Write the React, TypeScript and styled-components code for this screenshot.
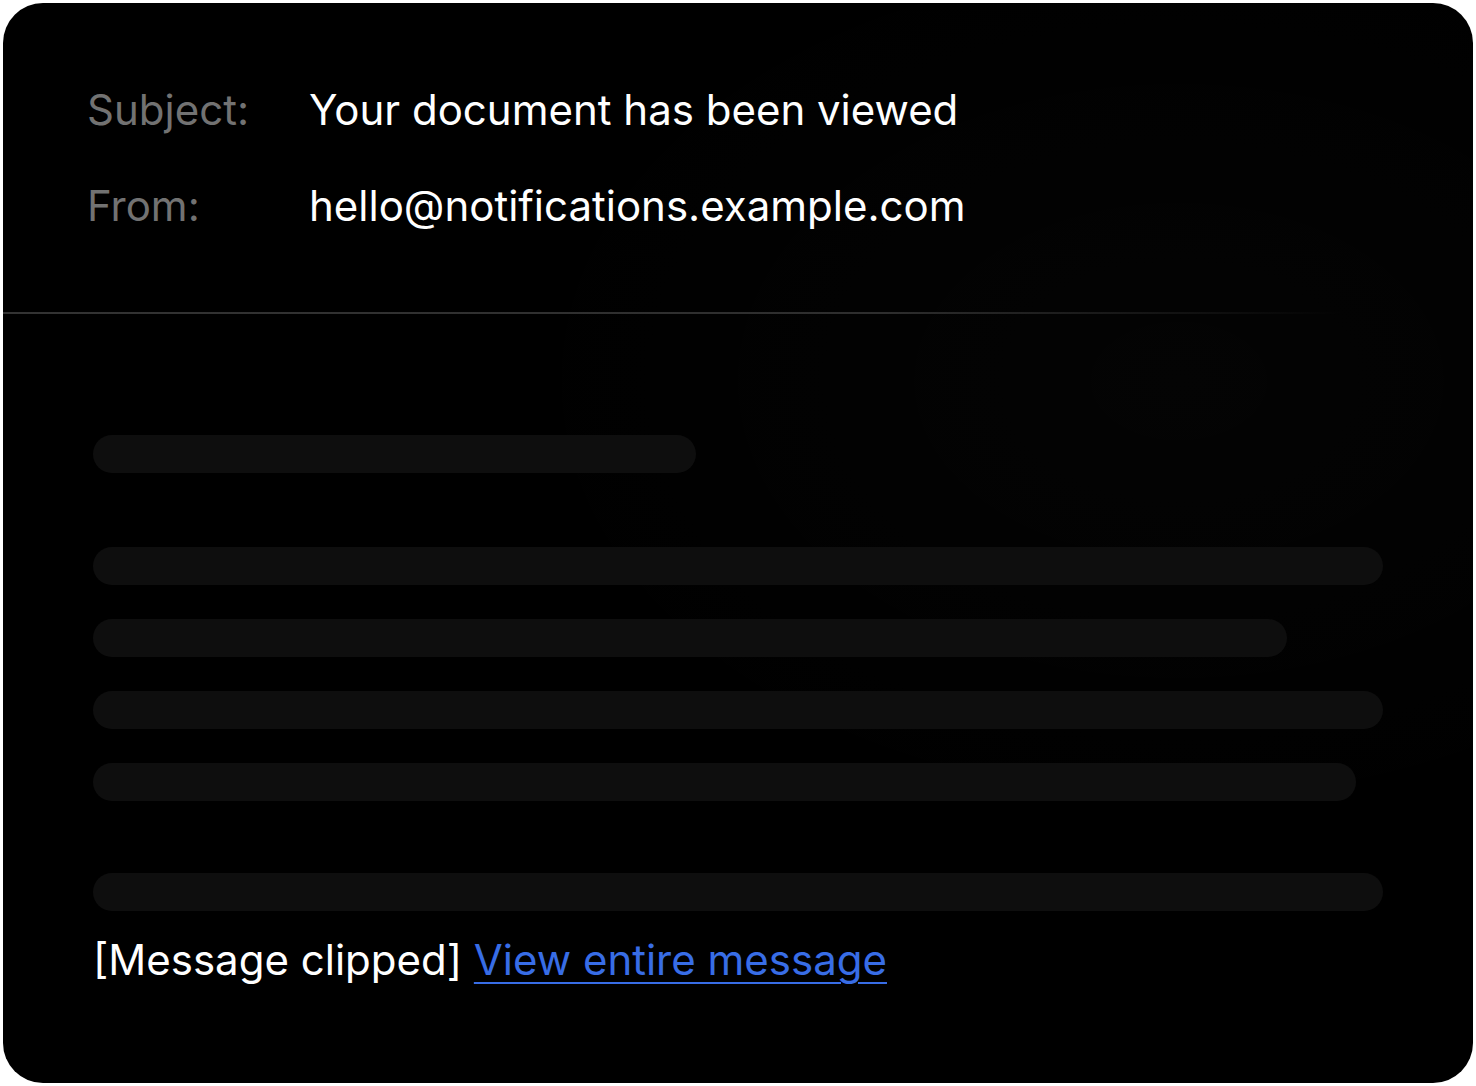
import React, { FC } from 'react';
import styled, { createGlobalStyle } from 'styled-components';

const GlobalStyle = createGlobalStyle`
  html, body {
    margin: 0;
    padding: 0;
    background: #ffffff;
  }

  body {
    font-family: Inter, 'Noto Sans', 'Liberation Sans', sans-serif;
  }
`;

const Page = styled.div`
  padding: 3px;
`;

const Card = styled.div`
  width: 1470px;
  height: 1080px;
  border-radius: 40px;
  overflow: hidden;
  background:
    radial-gradient(ellipse 60% 55% at 80% 35%, rgba(255, 255, 255, 0.014), transparent 80%),
    #000000;
  display: flex;
  flex-direction: column;
`;

const Header = styled.div`
  display: grid;
  grid-template-columns: 222px 1fr;
  row-gap: 48px;
  padding: 83px 84px 82px;
`;

const Label = styled.div`
  font-size: 42px;
  line-height: 48px;
  color: #727272;
`;

const Value = styled.div`
  font-size: 42px;
  line-height: 48px;
  color: #ffffff;
`;

const Divider = styled.div`
  height: 2px;
  background: linear-gradient(to right, #333333 0%, #2e2e2e 60%, rgba(40, 40, 40, 0) 91%);
`;

const Body = styled.div`
  display: flex;
  flex-direction: column;
  padding: 121px 90px 0;
`;

const Bar = styled.div<{ $width?: number; $gap?: number }>`
  height: 38px;
  border-radius: 19px;
  background: #0e0e0e;
  width: ${(p) => (p.$width ? `${p.$width}px` : '100%')};
  margin-top: ${(p) => p.$gap ?? 0}px;
`;

const Clipped = styled.div`
  margin-top: 25px;
  font-size: 42px;
  line-height: 48px;
  color: #ffffff;
`;

const ViewLink = styled.a`
  color: #386de6;
  text-decoration: underline;
  text-decoration-thickness: 2px;
  text-underline-offset: 7px;
  cursor: pointer;
`;

const bars = [
  { width: 603, gap: 0 },
  { gap: 74 },
  { width: 1194, gap: 34 },
  { gap: 34 },
  { width: 1263, gap: 34 },
  { gap: 72 },
];

const App: FC = () => (
  <Page>
    <GlobalStyle />
    <Card>
      <Header>
        <Label>Subject:</Label>
        <Value>Your document has been viewed</Value>
        <Label>From:</Label>
        <Value>hello@notifications.example.com</Value>
      </Header>

      <Divider />

      <Body>
        {bars.map((b, i) => (
          <Bar key={i} $width={b.width} $gap={b.gap} />
        ))}

        <Clipped>
          [Message clipped] <ViewLink>View entire message</ViewLink>
        </Clipped>
      </Body>
    </Card>
  </Page>
);

export default App;
